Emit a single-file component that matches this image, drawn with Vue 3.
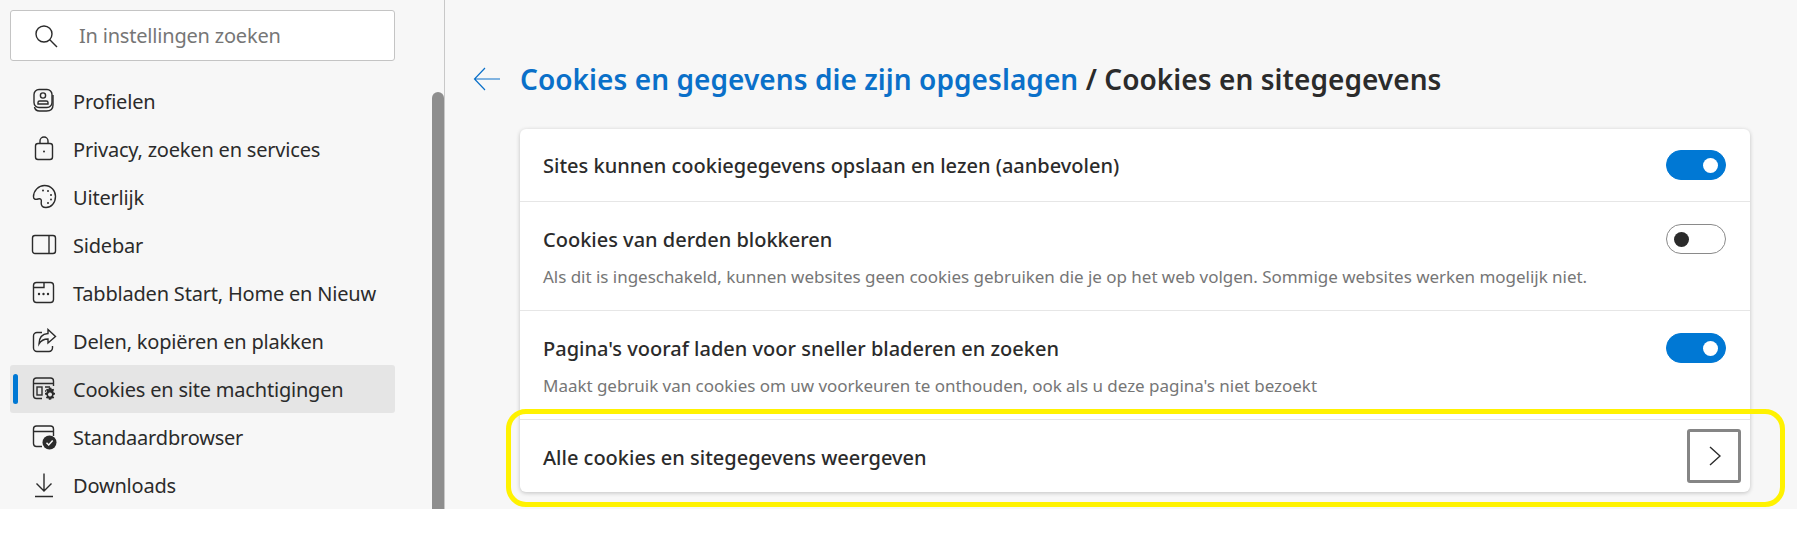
<template>
  <div class="page">
    <aside class="side">
      <div class="search">
        <svg class="search-icon" width="24" height="24" viewBox="0 0 24 24" fill="none" stroke="#2b2b2b" stroke-width="1.4">
          <circle cx="10" cy="10" r="8" />
          <path d="M15.8 15.8 23 23" />
        </svg>
        <span class="search-text">In instellingen zoeken</span>
      </div>
      <nav class="menu">
        <div v-for="item in menu" :key="item.label" class="menu-item" :class="{ active: item.active }">
          <span v-if="item.active" class="marker"></span>
          <svg class="menu-icon" width="26" height="26" viewBox="0 0 26 26" fill="none" stroke="#2b2b2b" stroke-width="1.4" v-html="item.icon"></svg>
          <span class="menu-label">{{ item.label }}</span>
        </div>
      </nav>
      <div class="scrollbar"></div>
    </aside>
    <main class="main">
      <header class="head">
        <svg class="back" width="27" height="24" viewBox="0 0 27 24" fill="none" stroke="#0a70c9" stroke-width="1.2">
          <path d="M12 1 1.500 12 12 23M1.500 12H27" />
        </svg>
        <h1 class="title"><a class="crumb">Cookies en gegevens die zijn opgeslagen</a> / Cookies en sitegegevens</h1>
      </header>
      <section class="card">
        <div v-for="row in rows" :key="row.title" class="row" :class="row.kind">
          <div class="row-text">
            <div class="row-title">{{ row.title }}</div>
            <div v-if="row.desc" class="row-desc">{{ row.desc }}</div>
          </div>
          <span v-if="row.toggle !== undefined" class="toggle" :class="{ on: row.toggle }"><span class="knob"></span></span>
          <span v-else class="chevron-box">
            <svg width="14" height="22" viewBox="0 0 14 22" fill="none" stroke="#2b2b2b" stroke-width="1.4"><path d="M3 2l10 9-10 9" /></svg>
          </span>
        </div>
      </section>
    </main>
    <div class="highlight"></div>
  </div>
</template>

<script setup>
const menu = [
  { label: 'Profielen', icon: '<rect x="3" y="1.500" width="18" height="18" rx="5"/><path d="M3.500 19c.5 2.500 2.500 4 5 4h7c4.500 0 6.500-2 6.500-6V7"/><circle cx="12" cy="7.500" r="2.600"/><path d="M7 16v-1.500c0-1 .8-1.500 1.700-1.500h6.600c.9 0 1.700.5 1.700 1.500V16z"/>' },
  { label: 'Privacy, zoeken en services', icon: '<rect x="4.500" y="7.500" width="17" height="16" rx="2.500"/><path d="M9 7.500V5a4 4 0 0 1 8 0v2.500"/><circle cx="13" cy="15.500" r="1" fill="#2b2b2b" stroke="none"/>' },
  { label: 'Uiterlijk', icon: '<path d="M13.500 1.500c6.500 0 11 4.800 11 10.800 0 7-4.500 11.200-9.500 11.200-3 0-4.800-1.800-4.800-4.300 0-1.800.7-3-.4-4-1.100-1-2.500-.2-4 .1-1.800.4-3.300-.5-3.300-2.600C2.500 6.800 7.500 1.500 13.500 1.500z"/><g fill="#2b2b2b" stroke="none"><circle cx="12" cy="6.500" r="1"/><circle cx="17" cy="7" r="1"/><circle cx="20" cy="11" r="1"/><circle cx="20" cy="15.500" r="1"/><circle cx="17" cy="19" r="1"/></g>' },
  { label: 'Sidebar', icon: '<rect x="1.500" y="3.500" width="23" height="18" rx="2.500"/><path d="M18 3.500v18"/>' },
  { label: 'Tabbladen Start, Home en Nieuw', icon: '<rect x="2.500" y="2.500" width="20" height="20" rx="3"/><path d="M2.500 7.500H13V2.500"/><g fill="#2b2b2b" stroke="none"><circle cx="8" cy="14" r="1.200"/><circle cx="12.500" cy="14" r="1.200"/><circle cx="17" cy="14" r="1.200"/></g>' },
  { label: 'Delen, kopiëren en plakken', icon: '<path d="M11 4.500H6a3.500 3.500 0 0 0-3.500 3.500v12A3.500 3.500 0 0 0 6 23.500h12a3.500 3.500 0 0 0 3.500-3.500v-2"/><path d="M17 1.500 24.500 8.500 17 15v-4c-4.500 0-7 1.500-9 5 0-6 3-10 9-10.500z"/>' },
  { label: 'Cookies en site machtigingen', active: true, icon: '<path d="M11 22.500H5.500a3 3 0 0 1-3-3V5a3 3 0 0 1 3-3h14a3 3 0 0 1 3 3v5M2.500 7.500h20"/><rect x="6" y="11" width="5" height="8"/><path d="M14 11h5M14 15h1"/><path fill="#2b2b2b" stroke="none" d="M19 11.500l1.300.2.500 1.500 1.500-.4.900 1.100-1 1.200.5 1.400 1.300.4v1.600l-1.400.4-.4 1.400 1 1.200-.9 1.100-1.500-.4-.6 1.400-1.300.2-1-.1-.5-1.500-1.500.4-1-1.100 1-1.200-.4-1.400-1.500-.4v-1.600l1.500-.4.400-1.400-1-1.200 1-1.100 1.500.4.500-1.500zM19 16.500a2 2 0 1 0 .01 0z"/>' },
  { label: 'Standaardbrowser', icon: '<path d="M11 22.500H5.500a3 3 0 0 1-3-3V5a3 3 0 0 1 3-3h14a3 3 0 0 1 3 3v7M2.500 7.500h20"/><circle cx="18.500" cy="18.500" r="7" fill="#2b2b2b" stroke="none"/><path d="M15.500 18.800l2.200 2.200 4-4.500" stroke="#f7f7f7" stroke-width="1.500"/>' },
  { label: 'Downloads', icon: '<path d="M13 1.500V19M5.500 11.500 13 19l7.500-7.500M4 24.500h18"/>' }
]

const rows = [
  { title: 'Sites kunnen cookiegegevens opslaan en lezen (aanbevolen)', toggle: true, kind: 'first' },
  { title: 'Cookies van derden blokkeren', desc: 'Als dit is ingeschakeld, kunnen websites geen cookies gebruiken die je op het web volgen. Sommige websites werken mogelijk niet.', toggle: false },
  { title: "Pagina's vooraf laden voor sneller bladeren en zoeken", desc: "Maakt gebruik van cookies om uw voorkeuren te onthouden, ook als u deze pagina's niet bezoekt", toggle: true },
  { title: 'Alle cookies en sitegegevens weergeven', kind: 'last' }
]
</script>

<style>
html, body {
  background: #fff;
}
</style>

<style scoped>
.page {
  position: relative;
  display: flex;
  width: 1797px;
  height: 509px;
  overflow: hidden;
  background: #f7f7f7;
  color: #2b2b2b;
  font-family: "Noto Sans", "Open Sans", sans-serif;
}

.side {
  position: relative;
  flex: none;
  box-sizing: border-box;
  width: 445px;
  padding: 10px 0 0 10px;
  border-right: 1px solid #c8c8c8;
}

.search {
  display: flex;
  align-items: center;
  box-sizing: border-box;
  width: 385px;
  height: 51px;
  padding-left: 23px;
  background: #fff;
  border: 1px solid #c4c4c4;
  border-radius: 3px;
}

.search-text {
  margin-left: 21px;
  font-size: 20px;
  letter-spacing: -0.2px;
  color: #767676;
}

.menu {
  margin-top: 16px;
  width: 385px;
}

.menu-item {
  position: relative;
  display: flex;
  align-items: center;
  height: 48px;
  padding-left: 21px;
  border-radius: 3px;
}

.menu-item.active {
  background: #e5e5e5;
}

.marker {
  position: absolute;
  left: 3px;
  top: 9px;
  width: 5px;
  height: 30px;
  border-radius: 3px;
  background: #0078d4;
}

.menu-icon {
  flex: none;
}

.menu-label {
  margin-left: 16px;
  font-size: 20px;
  letter-spacing: -0.2px;
  white-space: nowrap;
}

.scrollbar {
  position: absolute;
  right: 0;
  top: 92px;
  bottom: 0;
  width: 12px;
  border-radius: 6px 6px 0 0;
  background: #8e8e8e;
}

.main {
  flex: 1;
  padding: 58px 0 0 28px;
}

.head {
  display: flex;
  align-items: center;
  height: 42px;
  margin-bottom: 29px;
}

.back {
  flex: none;
}

.title {
  margin: 0 0 0 20px;
  font-size: 28px;
  font-weight: 600;
  letter-spacing: 0.06px;
  white-space: nowrap;
}

.crumb {
  color: #0a70c9;
}

.card {
  width: 1230px;
  margin-left: 47px;
  background: #fff;
  border-radius: 6px;
  box-shadow: 0 1px 4px rgba(0, 0, 0, 0.22);
}

.row {
  display: flex;
  justify-content: space-between;
  align-items: flex-start;
  box-sizing: border-box;
  height: 109px;
  padding: 22px 24px 0 23px;
  border-top: 1px solid #e6e6e6;
}

.row-text {
  padding-top: 1px;
}

.row.first {
  height: 72px;
  border-top: none;
  padding-top: 21px;
}

.row.last {
  height: 73px;
  padding: 9px 9px 0 23px;
}

.row.last .row-text {
  padding-top: 14px;
}

.row-title {
  font-size: 20px;
  line-height: 30px;
  font-weight: 500;
  white-space: nowrap;
}

.row-desc {
  margin-top: 10px;
  font-size: 17px;
  line-height: 24px;
  letter-spacing: -0.03px;
  color: #767676;
  white-space: nowrap;
}

.toggle {
  flex: none;
  box-sizing: border-box;
  display: flex;
  align-items: center;
  width: 60px;
  height: 30px;
  padding: 0 7px;
  border: 1px solid #8a8a8a;
  border-radius: 15px;
  background: #fff;
}

.knob {
  width: 15px;
  height: 15px;
  border-radius: 50%;
  background: #2b2b2b;
}

.toggle.on {
  justify-content: flex-end;
  background: #0078d4;
  border-color: #0078d4;
}

.toggle.on .knob {
  background: #fff;
}

.chevron-box {
  flex: none;
  display: flex;
  align-items: center;
  justify-content: center;
  box-sizing: border-box;
  width: 54px;
  height: 54px;
  border: 3px solid #858585;
  border-radius: 3px;
}

.highlight {
  position: absolute;
  left: 506px;
  top: 409px;
  width: 1279px;
  height: 98px;
  box-sizing: border-box;
  border: 5px solid #fff200;
  border-radius: 20px;
}
</style>
